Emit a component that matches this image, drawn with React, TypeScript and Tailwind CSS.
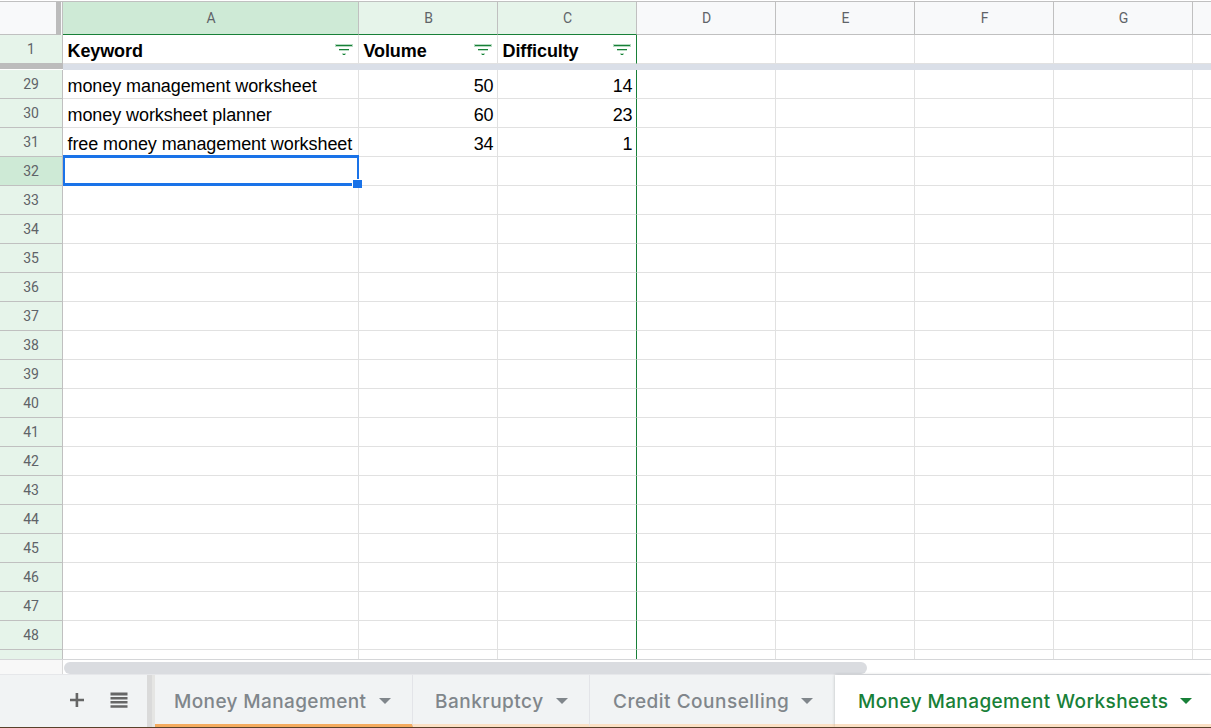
import React from "react";

const columns = [
  { name: "A", width: "w-[296px]" },
  { name: "B", width: "w-[139px]" },
  { name: "C", width: "w-[139px]" },
  { name: "D", width: "w-[139px]" },
  { name: "E", width: "w-[139px]" },
  { name: "F", width: "w-[139px]" },
  { name: "G", width: "w-[139px]" },
  { name: "", width: "w-[18px]" },
];

const data: Record<number, string[]> = {
  29: ["money management worksheet", "50", "14"],
  30: ["money worksheet planner", "60", "23"],
  31: ["free money management worksheet", "34", "1"],
};

const rows = Array.from({ length: 20 }, (_, i) => 29 + i);

function borderFor(i: number) {
  if (i === 7) return "";
  return i === 2 ? "border-r border-r-[#188038]" : "border-r border-r-[#e1e1e1]";
}

function FilterIcon() {
  return (
    <svg className="mr-[5px] mt-px h-3 w-[18px] shrink-0" viewBox="0 0 18 12" shapeRendering="crispEdges">
      <path d="M0 0h18v3H0zM4 5h10v2H4zM7 9h4v2H7z" fill="#b7dbc2" />
      <path d="M1 1h16v1H1zM4 5h10v1H4zM8 10h2v1H8z" fill="#188038" />
    </svg>
  );
}

function ColumnHeaders() {
  return (
    <div className="flex h-[34px] shrink-0 border-t border-[#c0c0c0] text-[14px] text-[#5f6368]">
      <div className="flex h-[33px] w-[63px] shrink-0 border-r border-[#c0c0c0] bg-[#f8f9fa]">
        <div className="flex-1 border-b border-[#c0c0c0]" />
        <div className="mr-px w-[5px] bg-[#bcbcbc]" />
      </div>
      {columns.map((c, i) => (
        <div
          key={i}
          className={`flex h-[33px] shrink-0 items-center justify-center border-b pl-px pt-px ${c.width} ${
            i < 7 ? "border-r border-r-[#c0c0c0]" : ""
          } ${i === 0 ? "bg-[#ceead6]" : i < 3 ? "bg-[#e6f4ea]" : "bg-[#f8f9fa]"} ${
            i < 3 ? "border-b-[#188038]" : "border-b-[#c0c0c0]"
          }`}
        >
          {c.name}
        </div>
      ))}
    </div>
  );
}

function FrozenRow() {
  const titles = ["Keyword", "Volume", "Difficulty"];
  return (
    <div className="flex h-[29px] shrink-0">
      <div className="flex w-[63px] shrink-0 items-center justify-center border-r border-[#c0c0c0] bg-[#e6f4ea] text-[14px] text-[#5f6368]">
        1
      </div>
      {columns.map((c, i) => (
        <div
          key={i}
          className={`flex shrink-0 items-center justify-between border-b border-b-[#e1e1e1] ${c.width} ${borderFor(i)}`}
        >
          {i < 3 && (
            <>
              <span className="pl-[4.5px] pt-[3px] font-['Liberation_Sans',Arial,sans-serif] text-[18px] font-bold leading-6 tracking-[-0.1px]">
                {titles[i]}
              </span>
              <FilterIcon />
            </>
          )}
        </div>
      ))}
    </div>
  );
}

function Row({ n }: { n: number }) {
  const values = data[n] ?? [];
  const active = n === 32;
  return (
    <div className="flex h-[29px] shrink-0">
      <div
        className={`flex w-[63px] shrink-0 items-center justify-center border-b border-r border-[#c0c0c0] text-[14px] text-[#5f6368] ${
          active ? "bg-[#ceead6]" : "bg-[#e6f4ea]"
        }`}
      >
        {n}
      </div>
      {columns.map((c, i) => (
        <div
          key={i}
          className={`relative flex shrink-0 items-center whitespace-nowrap border-b border-b-[#e1e1e1] pt-1 font-['Liberation_Sans',Arial,sans-serif] text-[18px] leading-6 tracking-[-0.08px] ${
            c.width
          } ${borderFor(i)} ${i === 0 ? "pl-[4.5px]" : "justify-end pr-[3.5px]"}`}
        >
          {values[i]}
          {active && i === 0 && (
            <>
              <div className="absolute left-0 -top-[2px] z-10 h-[31px] w-[296px] border-x-2 border-y-[3px] border-[#1a73e8]" />
              <div className="absolute -right-[4px] -bottom-[3px] z-20 h-[9px] w-[10px] border-l border-t border-white bg-[#1a73e8]" />
            </>
          )}
        </div>
      ))}
    </div>
  );
}

function Caret() {
  return (
    <svg className="h-[6px] w-[12px] shrink-0" viewBox="0 0 12 6">
      <path d="M0 0h12L6 6z" fill="currentColor" />
    </svg>
  );
}

function SheetTabs() {
  const label = "whitespace-nowrap pt-[2px] font-['Inter',sans-serif] text-[19px] font-medium leading-6";
  return (
    <div className="flex h-[53px] shrink-0 border-t border-[#e6e7ea] bg-[#f1f3f4] text-[#80868b]">
      <div className="flex w-[147px] shrink-0 items-start">
        <svg className="ml-[69px] mt-[17px] h-4 w-4" viewBox="0 0 16 16">
          <path d="M6.6 1h2.6v5.7H15v2.6H9.2V15H6.6V9.3H1V6.7h5.6z" fill="#666" />
        </svg>
        <svg className="ml-[25px] mt-[17px] h-[17px] w-[18px]" viewBox="0 0 18 17">
          <path d="M0.5 0.5h17v3H0.5zM0.5 5h17v2.5H0.5zM0.5 9h17v2.5H0.5zM0.5 13.2h17v2.6H0.5z" fill="#666" />
        </svg>
      </div>
      <div className="w-[5px] shrink-0 bg-[#dadada]" />
      <div className="w-[3px] shrink-0 bg-[#e5e5e3]" />
      <div className="flex w-[258px] shrink-0 items-center border-b-[3px] border-r border-b-[#f4ab60] border-r-[#e3e4e8] pl-[19px] pt-[2px]">
        <span className={`${label} w-[205px] tracking-[0.38px]`}>Money Management</span>
        <Caret />
      </div>
      <div className="flex w-[177px] shrink-0 items-center border-b-[3px] border-r border-b-[#fbe0c5] border-r-[#e3e4e8] pl-[22px] pt-[2px]">
        <span className={`${label} w-[121px] tracking-[0.5px]`}>Bankruptcy</span>
        <Caret />
      </div>
      <div className="flex w-[245px] shrink-0 items-center border-b-[3px] border-b-[#fbe0c5] pl-[23px] pt-[2px]">
        <span className={`${label} w-[188px] tracking-[0.5px]`}>Credit Counselling</span>
        <Caret />
      </div>
      <div className="flex flex-1 items-center border-b-[3px] border-b-[#fbe0c5] bg-white pl-[23px] pt-[2px] text-[#188038] shadow-[0_0_3px_rgba(60,64,67,0.3)]">
        <span className={`${label} w-[322px] shrink-0 tracking-[0.4px]`}>Money Management Worksheets</span>
        <Caret />
      </div>
    </div>
  );
}

export default function App() {
  return (
    <div className="flex h-[728px] w-[1211px] flex-col overflow-hidden bg-white pt-px font-['Roboto',sans-serif] text-black">
      <ColumnHeaders />
      <FrozenRow />
      <div className="flex h-[6px] shrink-0">
        <div className="-mt-px h-[6px] w-[63px] bg-[#bcbcbc]" />
        <div className="flex-1 bg-[#dadfe8]" />
      </div>
      <div className="flex h-[589px] shrink-0 flex-col overflow-hidden">
        {rows.map((n) => (
          <Row key={n} n={n} />
        ))}
        <div className="flex h-[9px] shrink-0">
          <div className="w-[63px] shrink-0 border-r border-[#c0c0c0] bg-[#e6f4ea]" />
          {columns.map((c, i) => (
            <div key={i} className={`shrink-0 ${c.width} ${borderFor(i)}`} />
          ))}
        </div>
      </div>
      <div className="flex h-[15px] shrink-0 border-t border-[#d5d6d8]">
        <div className="w-[63px] shrink-0 border-r border-[#d9d9d9] bg-[#f8f8f8]" />
        <div className="ml-px mt-[2px] h-3 w-[803px] rounded-full bg-[#dadce0]" />
      </div>
      <SheetTabs />
      <div className="h-px shrink-0 bg-[#59402a]" />
    </div>
  );
}
